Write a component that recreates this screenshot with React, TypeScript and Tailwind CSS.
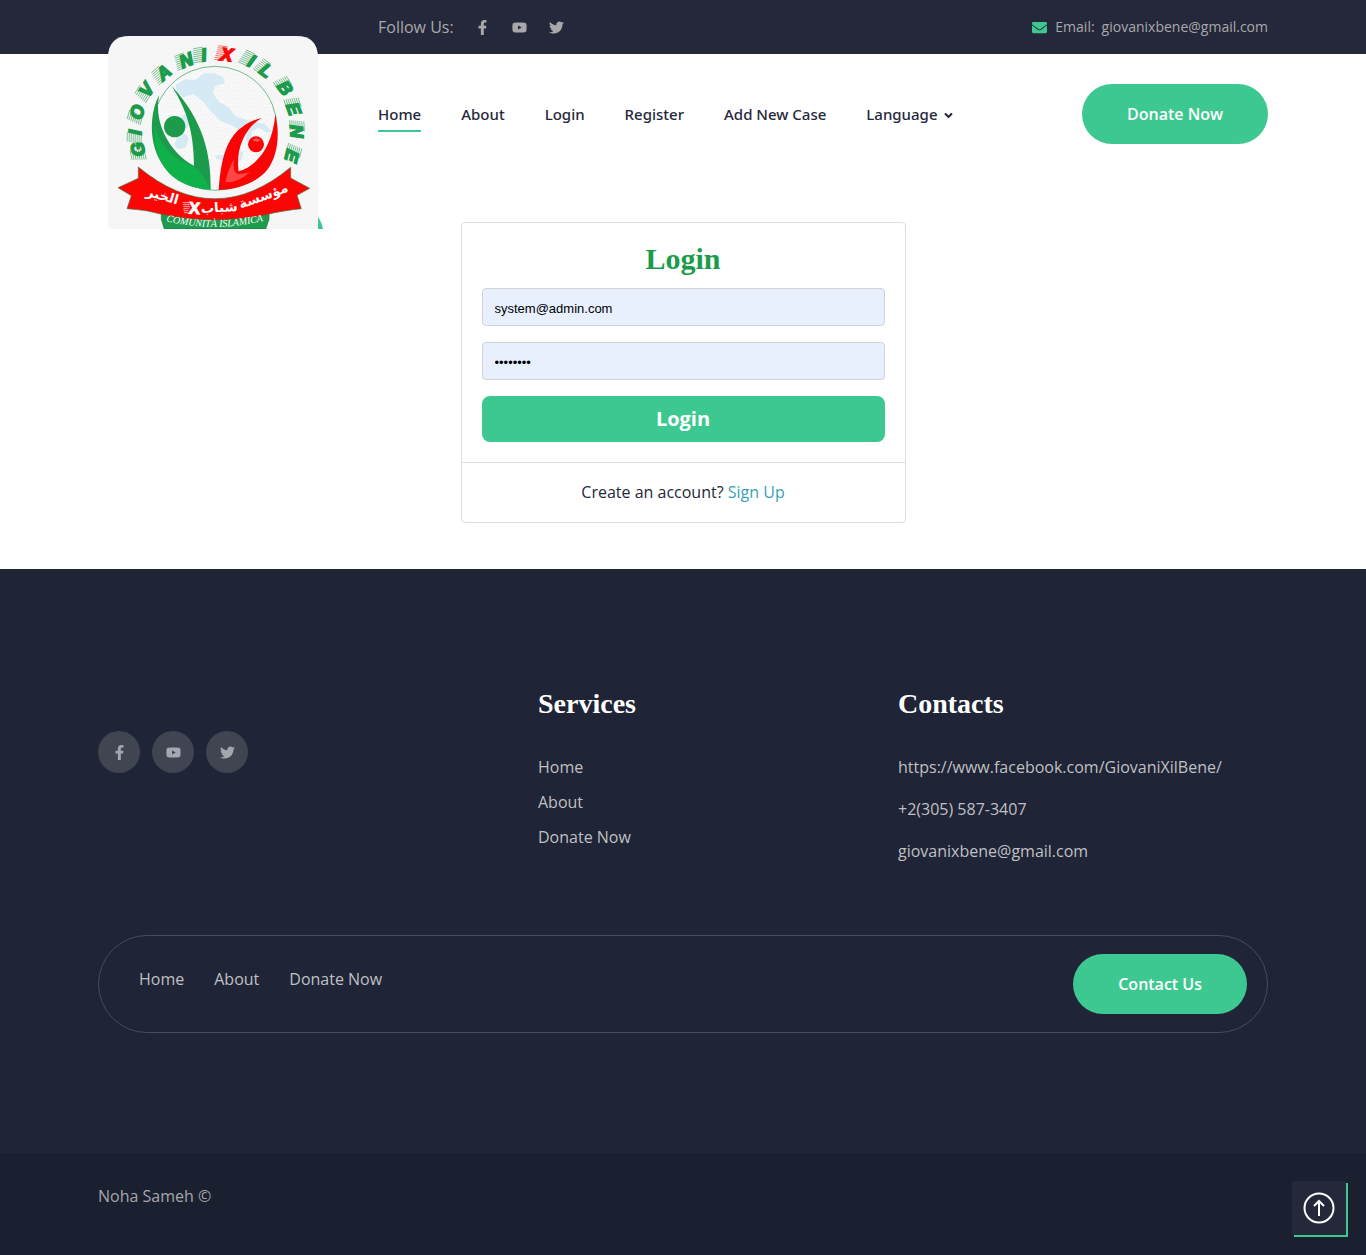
import { useState } from "react";
import { FaAngleDown, FaEnvelope, FaFacebookF, FaTwitter, FaYoutube } from "react-icons/fa";

const RING_LETTERS: { char: string; x: number; y: number; red?: boolean }[] = [
  { char: "G", x: 119, y: 374 },
  { char: "I", x: 110, y: 323 },
  { char: "O", x: 115, y: 262 },
  { char: "V", x: 142, y: 194 },
  { char: "A", x: 193, y: 141 },
  { char: "N", x: 260, y: 103 },
  { char: "I", x: 313, y: 86 },
  { char: "X", x: 382, y: 84, red: true },
  { char: "I", x: 457, y: 102 },
  { char: "L", x: 502, y: 130 },
  { char: "B", x: 560, y: 182 },
  { char: "E", x: 587, y: 244 },
  { char: "N", x: 597, y: 312 },
  { char: "E", x: 584, y: 386 },
];

function Logo() {
  return (
    <svg
      viewBox="30 30 645 579"
      className="absolute left-[10px] top-[36px] z-10 h-[193px] w-[215px]"
      role="img"
      aria-label="Giovani X il Bene"
    >
      <defs>
        <pattern id="bricks" width="16" height="12" patternUnits="userSpaceOnUse">
          <path d="M0 0H16M0 6H16M4 0V6M12 6V12" stroke="#e9e9e9" strokeWidth="1" />
        </pattern>
        <path id="banner-line" d="M204 586Q350 620 500 584" />
      </defs>
      <path d="M660 573Q671 587 675 609H660Z" fill="#3ec891" />
      <path d="M30 95Q30 30 95 30H595Q660 30 660 95V609H42Q30 609 30 597Z" fill="#f6f6f6" />
      <circle cx="351" cy="307" r="186" fill="#fafafa" />
      <circle cx="351" cy="307" r="186" fill="url(#bricks)" stroke="#2e9e57" strokeWidth="2" />
      <path
        d="M232 178L262 160L292 162L318 142L350 142L376 154L380 172L352 180L344 202L364 228L392 244L412 270L446 282L500 294L520 316L508 320L482 306L462 316L460 340L446 350L440 322L404 300L368 286L338 256L314 226L286 204L256 214L238 200Z"
        fill="#d5eaf4"
      />
      <path
        d="M352 388L392 386L436 376L432 398L420 412L386 406L354 398ZM236 334L262 322L272 340L262 366L240 370L230 356ZM250 270L268 262L274 290L266 308L254 302Z"
        fill="#d5eaf4"
      />
      {RING_LETTERS.map(({ char, x, y, red }, i) => {
        const angle = (Math.atan2(x - 352, 328 - y) * 180) / Math.PI;
        const color = red ? "#f90808" : "#1b9b4b";
        return (
          <g key={i} transform={`translate(${x} ${y}) rotate(${angle})`}>
            <path
              d="M-31 20H-2M-30 14H-1M-29 8H0M-28 2H1M-27 -4H2M-26 -10H3M-25 -16H4M-24 -22H5"
              stroke={color}
              strokeWidth="2"
              opacity="0.8"
            />
            <text
              x="4"
              y="20"
              textAnchor="middle"
              fill={color}
              stroke={color}
              strokeWidth="5"
              className="font-['Liberation_Sans'] text-[54px] font-bold italic"
            >
              {char}
            </text>
          </g>
        );
      })}
      <path
        d="M183 208C154 264 152 354 193 414C225 461 282 490 338 491C340 374 309 275 221 180C266 250 288 320 288 419C237 396 188 329 181 262Q177 236 183 208Z"
        fill="#1b9b4b"
      />
      <path
        d="M170 293C180 350 222 399 276 415C299 423 320 455 337 490C264 489 207 453 184 397Q165 348 170 293Z"
        fill="#0fb14b"
      />
      <circle cx="230" cy="302" r="32" fill="#1b9b4b" />
      <path d="M214 277Q245 278 260 308" fill="none" stroke="#0fb14b" strokeWidth="3" />
      <path
        d="M362 492C366 430 376 365 408 326Q443 286 492 276C443 302 412 367 422 436C482 418 524 357 532 265C547 330 538 391 508 431C475 471 416 492 362 492Z"
        fill="#fa0505"
      />
      <path d="M408 400Q402 437 419 444Q436 445 456 438Q420 471 382 469Q390 430 408 400Z" fill="#ff4646" />
      <circle cx="474" cy="355" r="24" fill="#fa0505" />
      <path d="M463 341Q477 331 488 343Q479 352 463 341Z" fill="#ff5252" />
      <path d="M190 560L190 580L199 609H503L513 580V560Z" fill="#1b9b4b" stroke="#16743a" strokeWidth="2" />
      <path
        d="M121 423Q350 613 578 424V456L635 487L597 508L610 548Q545 555 505 566Q350 598 195 566Q147 551 87 548L100 509L60 485L121 457Z"
        fill="#fb0505"
        stroke="#457947"
        strokeWidth="2"
      />
      <g fill="white" textAnchor="middle" className="font-['DejaVu_Sans',sans-serif] text-[40px] font-bold">
        <text transform="translate(501 522) rotate(-20)">مؤسسة</text>
        <text transform="translate(364 558) rotate(-3)">شباب</text>
        <text transform="translate(190 522) rotate(16)">الخير</text>
        <text
          transform="translate(288 564) rotate(4)"
          stroke="white"
          strokeWidth="3"
          className="font-['Liberation_Sans'] text-[50px]"
        >
          X
        </text>
      </g>
      <path d="M254 530H274M255 536H275M256 542H276M256 548H274M257 554H271M258 560H269" stroke="white" strokeWidth="2" />
      <text fill="white" className="font-['Liberation_Serif'] text-[30px] italic">
        <textPath href="#banner-line">COMUNITÀ ISLAMICA</textPath>
      </text>
    </svg>
  );
}

const SOCIALS = [
  { label: "Facebook", Icon: FaFacebookF },
  { label: "YouTube", Icon: FaYoutube },
  { label: "Twitter", Icon: FaTwitter },
];

const NAV = ["About", "Login", "Register", "Add New Case"];
const FOOTER_LINKS = ["Home", "About", "Donate Now"];
const CONTACTS = ["https://www.facebook.com/GiovaniXilBene/", "+2(305) 587-3407", "giovanixbene@gmail.com"];

export default function App() {
  const [email, setEmail] = useState("system@admin.com");
  const [password, setPassword] = useState("password");

  return (
    <div className="bg-white font-['Open_Sans',sans-serif] text-base text-[#25283a]">
      <header>
        <div className="bg-[#25283b] text-[#a8a8ab]">
          <div className="relative mx-auto flex h-[54px] max-w-[1170px] items-center justify-between pl-[280px]">
            <Logo />
            <div className="flex items-center">
              <span>Follow Us:</span>
              <div className="ml-[21px] flex gap-[22px] text-[15px]">
                {SOCIALS.map(({ label, Icon }) => (
                  <a key={label} href="#" aria-label={label}>
                    <Icon />
                  </a>
                ))}
              </div>
            </div>
            <a href="mailto:giovanixbene@gmail.com" className="flex items-center text-sm">
              <FaEnvelope className="mr-2 size-[15px] text-[#3ec891]" />
              Email:
              <span className="ml-[7px]">giovanixbene@gmail.com</span>
            </a>
          </div>
        </div>
        <div className="mx-auto flex h-[120px] max-w-[1170px] items-center justify-between pl-[280px]">
          <nav className="flex items-center gap-10 font-['Noto_Sans','Open_Sans',sans-serif] text-[15px] font-medium leading-6">
            <a href="#" className="border-b-2 border-[#3ec891] pb-1 pt-1.5">
              Home
            </a>
            {NAV.map((item) => (
              <a key={item} href="#">
                {item}
              </a>
            ))}
            <button type="button" className="flex items-center gap-1">
              Language
              <FaAngleDown className="mt-0.5 size-[13px]" />
            </button>
          </nav>
          <a href="#" className="rounded-full bg-[#3ec891] px-[45px] py-[18px] font-semibold text-white">
            Donate Now
          </a>
        </div>
      </header>

      <main className="flex justify-center pb-[46px] pt-12">
        <section className="w-full max-w-[445px] rounded border border-[#dfdfdf]">
          <form className="p-5 pt-[18px]" onSubmit={(e) => e.preventDefault()}>
            <h1 className="mb-[11px] text-center font-['Liberation_Serif',serif] text-[30px] font-bold leading-9 text-[#1b9b4b]">
              Login
            </h1>
            <input
              type="email"
              aria-label="Email"
              value={email}
              onChange={(e) => setEmail(e.target.value)}
              className="mb-4 block h-[38px] w-full rounded border border-[#ced4da] bg-[#e8f0fe] px-3 pt-0.5 font-['Liberation_Sans',sans-serif] text-[13px] text-black"
            />
            <input
              type="password"
              aria-label="Password"
              value={password}
              onChange={(e) => setPassword(e.target.value)}
              className="mb-4 block h-[38px] w-full rounded border border-[#ced4da] bg-[#e8f0fe] px-3 pt-0.5 font-['Liberation_Sans',sans-serif] text-[13px] text-black"
            />
            <button
              type="submit"
              className="block h-[46px] w-full rounded-lg bg-[#3ec891] text-xl font-bold text-white"
            >
              Login
            </button>
          </form>
          <p className="border-t border-[#dfdfdf] py-[17px] text-center leading-[25px]">
            Create an account?{" "}
            <a href="#" className="text-[#3b9fb8]">
              Sign Up
            </a>
          </p>
        </section>
      </main>

      <footer className="bg-[#1f2436] text-[#bfc0c2]">
        <div className="mx-auto max-w-[1170px] pb-[120px] pt-[117px]">
          <div className="grid grid-cols-[440fr_360fr_370fr]">
            <div className="flex gap-3 pt-[45px]">
              {SOCIALS.map(({ label, Icon }) => (
                <a
                  key={label}
                  href="#"
                  aria-label={label}
                  className="flex size-[42px] items-center justify-center rounded-full bg-[#414552] text-[15px] text-[#a5a6ae]"
                >
                  <Icon />
                </a>
              ))}
            </div>
            <div>
              <h2 className="mb-7 font-['Liberation_Serif',serif] text-[28px] font-bold leading-9 text-white">Services</h2>
              <ul className="leading-[35px]">
                {FOOTER_LINKS.map((item) => (
                  <li key={item}>
                    <a href="#">{item}</a>
                  </li>
                ))}
              </ul>
            </div>
            <div>
              <h2 className="mb-6 font-['Liberation_Serif',serif] text-[28px] font-bold leading-9 text-white">Contacts</h2>
              <ul className="leading-[42px]">
                {CONTACTS.map((item) => (
                  <li key={item}>
                    <a href="#">{item}</a>
                  </li>
                ))}
              </ul>
            </div>
          </div>
          <div className="mt-[63px] flex h-[98px] items-center justify-between rounded-full border border-[#484c5d] pl-10 pr-5">
            <nav className="mb-[10px] flex gap-[30px]">
              {FOOTER_LINKS.map((item) => (
                <a key={item} href="#">
                  {item}
                </a>
              ))}
            </nav>
            <a href="#" className="rounded-full bg-[#3ec891] px-[45px] py-[18px] font-semibold text-white">
              Contact Us
            </a>
          </div>
        </div>
        <div className="bg-[#1b2030] text-[#a5a7ab]">
          <p className="mx-auto max-w-[1170px] pb-[47px] pt-[31px]">Noha Sameh ©</p>
        </div>
      </footer>

      <button
        type="button"
        aria-label="Back to top"
        onClick={() => window.scrollTo({ top: 0, behavior: "smooth" })}
        className="fixed bottom-5 right-5 flex size-[54px] items-center justify-center bg-[#25283b] text-white shadow-[2px_2px_0_#3ec891]"
      >
        <svg viewBox="0 0 32 32" className="size-8" fill="none" stroke="currentColor" strokeWidth="2">
          <circle cx="16" cy="16" r="14.5" />
          <path d="M16 24V9.5M11 14L16 9L21 14" />
        </svg>
      </button>
    </div>
  );
}
